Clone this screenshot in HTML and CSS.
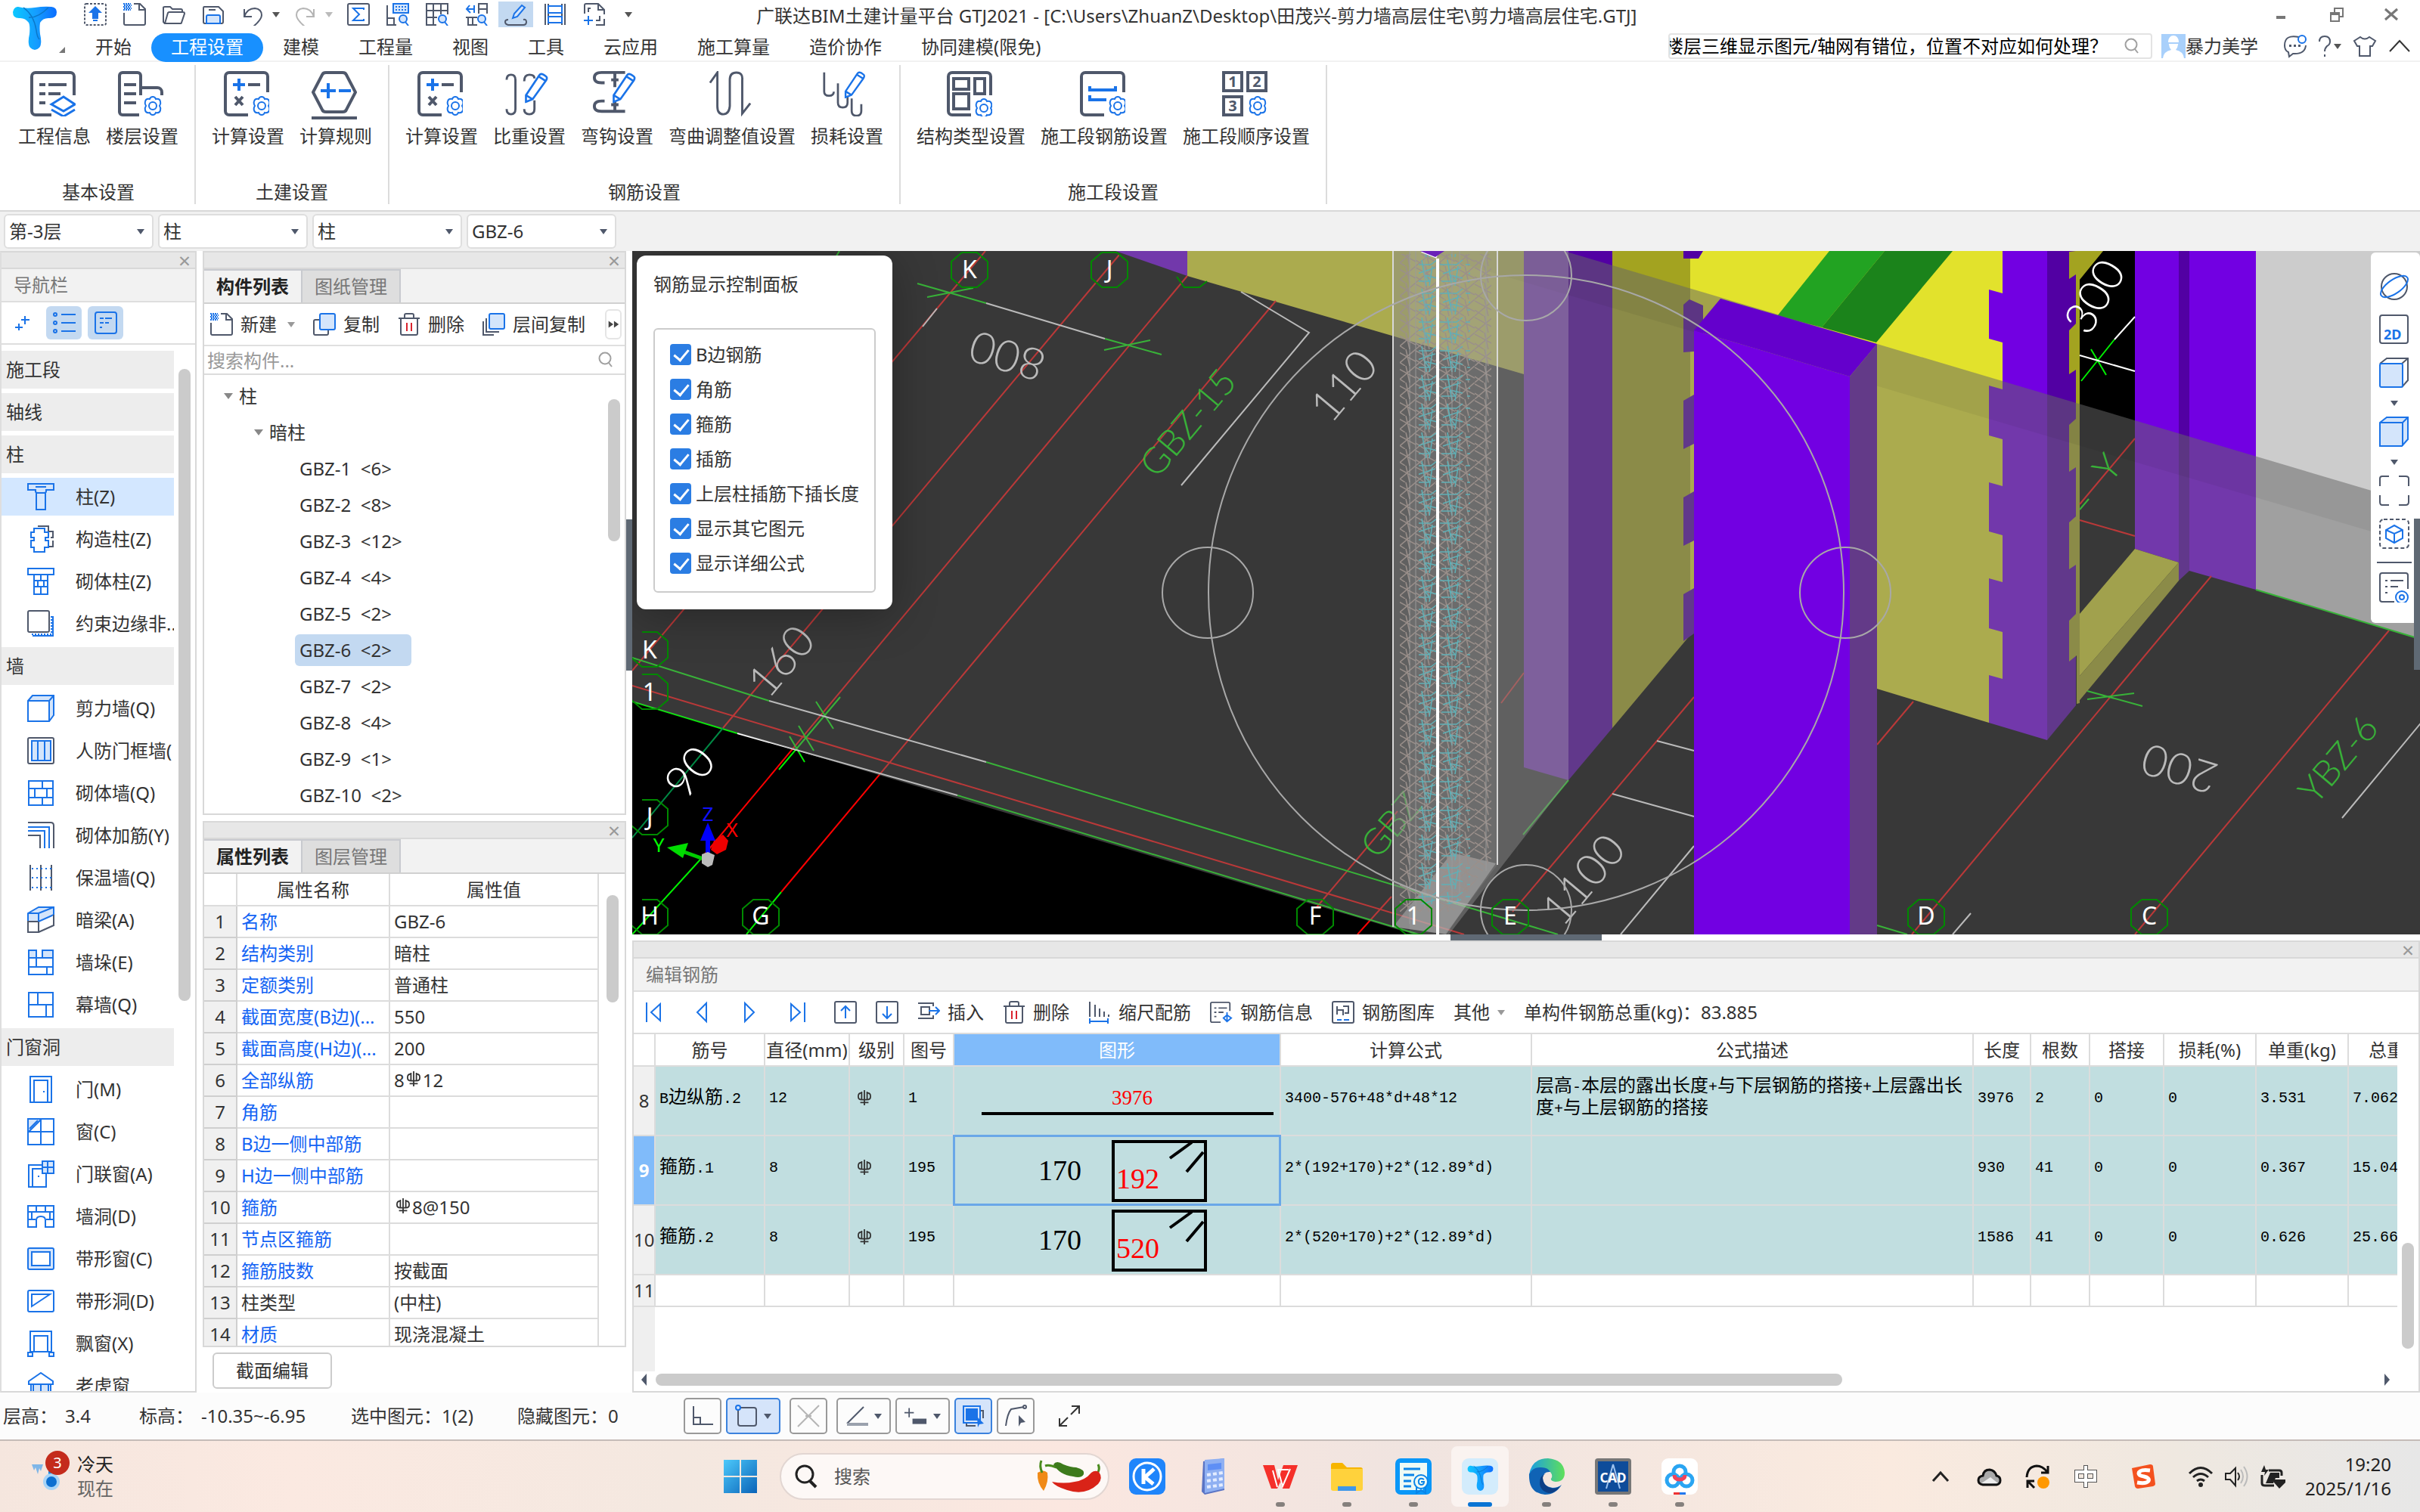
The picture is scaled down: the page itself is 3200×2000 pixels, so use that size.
FILE: index.html
```html
<!DOCTYPE html>
<html lang="zh-CN">
<head>
<meta charset="utf-8">
<title>广联达BIM土建计量平台 GTJ2021</title>
<link rel="stylesheet" href="styles.css">
</head>
<body>

<!-- ICONS -->
<svg class="defs" aria-hidden="true">
<symbol id="i-logo" viewBox="0 0 60 60"><defs><linearGradient id="tg" x1="0" x2="1"><stop offset="0" stop-color="#0cc8ff"/><stop offset=".55" stop-color="#159cff"/><stop offset="1" stop-color="#0a6dff"/></linearGradient></defs><path fill="url(#tg)" d="M8 3q10 3 22 1t22-1q7 1 7 7 0 8-9 8-9-1-13 6-1 7 0 15 3 13-1 18-6 6-12 0-4-5-1-18 1-11-1-15-5-7-13-6-8 0-8-8 1-6 6-7z"/><path fill="none" stroke="#0b77c8" stroke-width="1.5" d="M15 4q14 10 17 30 1 9 4 12M22 17q12 1 26-13"/></symbol>
<symbol id="q-up" viewBox="0 0 30 30"><rect class="d" stroke-dasharray="3 2" x="1" y="1" width="28" height="28" rx="2"/><path class="bf" d="M15 4l9 9h-5v8h-8v-8H6zM12 22h6v2h-6z"/></symbol>
<symbol id="q-new" viewBox="0 0 30 30"><path class="d" d="M14 1h8l7 7v19a2 2 0 0 1-2 2H3a2 2 0 0 1-2-2V13M21 1v8h8"/><path class="b" stroke-dasharray="2 1" d="M0 1h10M1 3h10M0 5h10M1 7h10M0 9h10"/></symbol>
<symbol id="q-open" viewBox="0 0 30 30"><path class="d" d="M3 27L1 25V6q0-1 2-1h7l3 3h11q2 0 2 2v3M3 27h20q2 0 2-1l4-12q0-2-2-2H9q-1 0-2 1z"/></symbol>
<symbol id="q-save" viewBox="0 0 30 30"><path class="d" d="M3 5h19l6 6v14q0 2-2 2H4q-2 0-2-2V7q0-2 1-2zM9 9h9"/><path class="b lf" d="M6 27V18q0-2 2-2h14q2 0 2 2v9z"/></symbol>
<symbol id="q-undo" viewBox="0 0 30 30"><path class="d" d="M4 8v10h10M4 18Q8 7 18 7q9 1 9 9 0 6-12 16"/></symbol>
<symbol id="q-redo" viewBox="0 0 30 30"><path class="l" d="M26 8v10H16M26 18Q22 7 12 7 3 8 3 16q0 6 12 16"/></symbol>
<symbol id="q-sum" viewBox="0 0 30 30"><rect class="d" x="1" y="1" width="28" height="28" rx="2"/><path class="b" stroke-width="3" d="M22 9V7H8l8 8-8 8h14v-2"/></symbol>
<symbol id="q-find" viewBox="0 0 30 30"><rect class="b lf" x="9" y="1" width="20" height="12"/><path class="b" stroke-dasharray="2 2" d="M12 5h15M12 9h15"/><path class="d" d="M1 3v26h12M1 20h9v9"/><circle class="b lf" cx="22" cy="21" r="5"/><path class="b" d="M25 25l4 5"/></symbol>
<symbol id="q-grid" viewBox="0 0 30 30"><path class="d" d="M14 29H1V1h28v14M1 10h28M1 19h14M10 1v28M20 1v14"/><circle class="b lf" cx="22" cy="21" r="5"/><path class="b" d="M25 25l4 5"/></symbol>
<symbol id="q-swap" viewBox="0 0 30 30"><path class="b" d="M2 8h10M6 3L2 8l5 5M12 3v10"/><path class="d" d="M18 14V1h11v13M18 8h11M1 19h15M4 19v10h12M10 19v10"/><circle class="b lf" cx="22" cy="21" r="5"/><path class="b" d="M25 25l4 5"/></symbol>
<symbol id="q-edit" viewBox="0 0 30 30"><path class="b lf" d="M11 20l2-6L23 3l4 3-10 12z"/><path class="d" d="M5 22q-4 0-4 3t4 4h20q4 0 4-4t-4-3"/></symbol>
<symbol id="q-film" viewBox="0 0 30 30"><path class="d" d="M2 1v28M28 1v28M6 1v28M24 1v28"/><path class="b wf" d="M6 4h18v9H6zM6 18h18v8H6z"/></symbol>
<symbol id="q-page" viewBox="0 0 30 30"><path class="d" d="M2 14V3q0-2 2-2h16l8 8v6M20 1v8h8M28 21v8H17M10 7H7v5M22 17v6h-5"/><path class="b" d="M7 17v12M1 23h12"/></symbol>

<symbol id="gear" viewBox="0 0 26 26"><path class="b w2" d="M13 1q3 0 4 3 5-1 6 3 1 3-1 6 2 3 1 6-1 4-6 3-1 3-4 3t-4-3q-5 1-6-3-1-3 1-6-2-3-1-6 1-4 6-3 1-3 4-3z"/><circle class="b w2" cx="13" cy="13" r="5"/></symbol>
<symbol id="pencil" viewBox="0 0 36 46"><path class="b w3" d="M2 44V34L22 4q2-3 6-1l3 2q4 2 1 7L12 40zM2 34l10 6M21 6l11 7"/></symbol>
<symbol id="r-info" viewBox="0 0 60 60"><path class="d w4" d="M58 32V7a5 5 0 0 0-5-5H7a5 5 0 0 0-5 5v46a5 5 0 0 0 5 5h21M12 18h8M24 18h24M12 30h8M24 30h16M12 42h8"/><path class="b w3" d="M28 44l16-10 15 10-15 9zM28 51l16 9 15-9"/></symbol>
<symbol id="r-floor" viewBox="0 0 60 60"><path class="d w4" d="M30 32V6a4 4 0 0 0-4-4H6a4 4 0 0 0-4 4v48a4 4 0 0 0 4 4h22M30 22h22a6 6 0 0 1 6 6v4M8 18h16M8 30h16M8 42h16"/><use href="#gear" x="33" y="33" width="26" height="26"/></symbol>
<symbol id="r-calc" viewBox="0 0 60 60"><path class="d w4" d="M58 28V7a5 5 0 0 0-5-5H7a5 5 0 0 0-5 5v46a5 5 0 0 0 5 5h25M32 18h16M15 34l10 11M25 34L15 45"/><path class="b w4" d="M12 18h16M20 10v16"/><use href="#gear" x="37" y="33" width="26" height="26"/></symbol>
<symbol id="r-rule" viewBox="0 0 60 60"><path class="d w4" d="M2 28L14 5q1-3 5-3h22q4 0 5 3l12 23-12 23q-1 3-5 3H19q-4 0-5-3zM0 62h60"/><path class="b w4" d="M12 26h20M22 16v20M36 26h16"/></symbol>
<symbol id="r-weight" viewBox="0 0 62 62"><path class="d w3" d="M2 12q0-7 6-7t6 7v40q0 7-6 7t-6-7M26 14q0-9 7-9t7 5M26 52q0 7 7 7t7-7V40"/><use href="#pencil" x="25" y="2" width="36" height="42"/></symbol>
<symbol id="r-hook" viewBox="0 0 62 62"><path class="d w4" d="M44 2H12Q2 2 2 9t10 7h4M30 2v20M25 12h10M44 55H12Q2 55 2 48t10-7h4M30 55V42M25 46h10"/><use href="#pencil" x="25" y="2" width="36" height="42"/></symbol>
<symbol id="r-bend" viewBox="0 0 60 62"><path class="d w3" d="M2 16L12 2v46q0 11 8 11t9-11V12q0-10 9-10t8 10v46l11-14"/></symbol>
<symbol id="r-loss" viewBox="0 0 66 66"><path class="d w3" d="M2 2v28q0 6 7 6t7-6M22 18v28q0 7 7 7t7-7V36M42 40v18q0 7 7 7t7-7v-10"/><use href="#pencil" x="29" y="0" width="36" height="40"/></symbol>
<symbol id="r-struct" viewBox="0 0 60 60"><path class="d w4" d="M58 32V7a5 5 0 0 0-5-5H7a5 5 0 0 0-5 5v46a5 5 0 0 0 5 5h25M9 10h20v14H9zM37 10h13v20H37zM9 30h20v20H9z"/><use href="#gear" x="36" y="36" width="26" height="26"/></symbol>
<symbol id="r-seg" viewBox="0 0 60 60"><path class="d w4" d="M58 28V7a5 5 0 0 0-5-5H7a5 5 0 0 0-5 5v46a5 5 0 0 0 5 5h25"/><path class="b w4" d="M13 20v5h34v-5M13 32v6h22"/><use href="#gear" x="37" y="33" width="26" height="26"/></symbol>

<symbol id="n-col" viewBox="0 0 36 36"><path class="b lf" d="M1 1h34v8H25v2q0 2-3 2h-8q-3 0-3-2V9H1z"/><path class="b" d="M11 5h14M12 13h12v22H12z"/></symbol>
<symbol id="n-gz" viewBox="0 0 36 36"><path class="d" d="M14 1h14v7h6v8h-3M34 20v8h-6"/><path class="b wf" d="M9 4h14v5h5v7h-4v4h4v9h-5v6H9v-6H5v-9h4v-4H5V9h4z"/></symbol>
<symbol id="n-qt" viewBox="0 0 36 36"><path class="b" d="M1 1h34v8H1zM9 9h18v26H9zM9 17h18M9 25h18M18 9v8M14 17v8M22 17v8M18 25v10"/></symbol>
<symbol id="n-ys" viewBox="0 0 36 36"><path class="b" d="M34 8v26H7"/><path class="b" stroke-dasharray="2 2" stroke-width="4" d="M6 32h26V8"/><rect class="d wf" x="1" y="1" width="28" height="28" rx="2"/></symbol>
<symbol id="n-box" viewBox="0 0 36 36"><path class="b lf" d="M1 8l6-7h28v26l-6 8H1z"/><rect class="b wf" x="1" y="8" width="28" height="27" rx="1"/><path class="b" d="M29 8l6-7"/></symbol>
<symbol id="n-rf" viewBox="0 0 36 36"><rect class="d" x="1" y="1" width="34" height="34" rx="2"/><path class="b lf" d="M6 5h25v26H6zM14 5v26M23 5v26"/></symbol>
<symbol id="n-brick" viewBox="0 0 36 36"><path class="b" d="M2 2h32v32H2zM2 12h32M2 24h32M20 2v10M10 12v12M26 12v12M20 24v10"/></symbol>
<symbol id="n-jj" viewBox="0 0 36 36"><path class="d" d="M1 1h30q4 0 4 4v30M1 18h16v17"/><path class="b" d="M1 7h28v28M1 12h22v23"/></symbol>
<symbol id="n-bw" viewBox="0 0 36 36"><path class="d" d="M4 1v34M18 1v34M32 1v34"/><path class="b" stroke-dasharray="2 4" d="M6 6h26M6 18h26M6 31h26"/></symbol>
<symbol id="n-beam" viewBox="0 0 36 36"><path class="b lf" d="M1 9l14-8h20v10l-20 9H1z"/><path class="d wf" d="M1 20h14v14H1zM15 34l20-9V11"/><path class="b" d="M1 9h14v11M15 9l20-8"/></symbol>
<symbol id="n-duo" viewBox="0 0 36 36"><path class="b lf" d="M2 2h10v10H2zM20 2h14v10H20z"/><path class="b" d="M2 2v32h32V2M2 12h32M2 24h32M12 12v12M26 24v10"/></symbol>
<symbol id="n-mu" viewBox="0 0 36 36"><path class="b" d="M2 2h32v32H2zM2 18h32M14 2v16M25 18v16"/></symbol>
<symbol id="n-door" viewBox="0 0 36 36"><path class="b" d="M4 35V1h28v34h-5V6H9v29zM9 35h18M22 20v2"/></symbol>
<symbol id="n-win" viewBox="0 0 36 36"><path class="b lf" d="M1 1h18L1 19z"/><path class="b" d="M1 1h34v34H1zM1 18h34M18 1v34M3 14L14 3"/></symbol>
<symbol id="n-dw" viewBox="0 0 36 36"><path class="b" d="M20 6H2v29h23V18M7 35V11h13M15 20v2"/><path class="b lf" d="M20 1h15v16H20zM20 9h15M27 1v16"/></symbol>
<symbol id="n-hole" viewBox="0 0 36 36"><path class="b" d="M1 4h34v28H24v-9q0-5-6-5t-6 5v9H1zM1 12h34M1 22h10M25 22h10M12 4v8M24 4v8M6 12v10M30 12v10"/></symbol>
<symbol id="n-band" viewBox="0 0 36 36"><rect class="b lf" x="1" y="4" width="34" height="28" rx="2"/><rect class="b wf" x="6" y="9" width="24" height="18"/></symbol>
<symbol id="n-bdh" viewBox="0 0 36 36"><rect class="b" x="1" y="4" width="34" height="28" rx="2"/><path class="b" d="M6 9h24L6 25z"/></symbol>
<symbol id="n-bay" viewBox="0 0 36 36"><path class="b" d="M4 29V2h28v27M9 29V8h18v21M4 29h28M1 30h6v5H1zM29 30h6v5h-6z"/></symbol>
<symbol id="n-roof" viewBox="0 0 36 36"><path class="b lf" d="M8 16h20v18H8z"/><path class="b" d="M2 12L18 1l16 11v4H2zM5 16v20M31 16v20M18 16v18"/></symbol>

<symbol id="s-copy" viewBox="0 0 30 30"><path class="d" d="M8 9H3q-2 0-2 2v16q0 2 2 2h15q2 0 2-2v-5"/><rect class="b lf" x="9" y="1" width="20" height="21" rx="2"/></symbol>
<symbol id="s-del" viewBox="0 0 30 30"><path class="d" d="M1 7h28M9 7V3q0-2 2-2h8q2 0 2 2v4M4 7v20q0 2 2 2h18q2 0 2-2V7"/><path class="r" d="M12 13v11M18 13v11"/></symbol>
<symbol id="s-lcopy" viewBox="0 0 30 30"><path class="d" d="M1 11v18h14M5 7v18h17"/><rect class="b lf" x="9" y="1" width="20" height="20" rx="2"/></symbol>
<symbol id="s-mag" viewBox="0 0 22 22"><circle cx="10" cy="9" r="7.5" fill="none" stroke="#a0a0a0" stroke-width="2"/><path d="M15 15l4 5" stroke="#a0a0a0" stroke-width="2"/></symbol>
<symbol id="s-spark" viewBox="0 0 20 20"><path class="b" d="M13 1v11M8 6h11M5 11v9M0 16h10"/></symbol>
<symbol id="s-list" viewBox="0 0 30 30"><path class="b" d="M11 4h19M11 15h19M11 26h19"/><circle class="b" cx="3" cy="4" r="2"/><circle class="b" cx="3" cy="15" r="2"/><circle class="b" cx="3" cy="26" r="2"/></symbol>
<symbol id="s-card" viewBox="0 0 30 30"><rect class="b" x="1" y="1" width="28" height="28" rx="3"/><path class="b" d="M7 9h5M14 9h9M7 15h5M14 15h5M7 21h3"/></symbol>
<symbol id="s-bar" viewBox="0 0 20 22"><path fill="none" stroke="#333" stroke-width="2" d="M10 0v22M6 2v13M14 2v13M6 4Q1 4 1 9t5 5h8q5 0 5-5t-5-5M4 18h12"/></symbol>

<symbol id="e-first" viewBox="0 0 30 30"><path class="b" d="M5 2v26M23 4v22L11 15z"/></symbol>
<symbol id="e-prev" viewBox="0 0 30 30"><path class="b" d="M21 3v24L9 15z"/></symbol>
<symbol id="e-next" viewBox="0 0 30 30"><path class="b" d="M9 3v24l12-12z"/></symbol>
<symbol id="e-last" viewBox="0 0 30 30"><path class="b" d="M25 2v26M7 4v22l12-11z"/></symbol>
<symbol id="e-up" viewBox="0 0 30 30"><rect class="d" x="1" y="1" width="28" height="28" rx="2"/><path class="b" d="M15 23V7M9 13l6-6 6 6"/></symbol>
<symbol id="e-down" viewBox="0 0 30 30"><rect class="d" x="1" y="1" width="28" height="28" rx="2"/><path class="b" d="M15 7v16M9 17l6 6 6-6"/></symbol>
<symbol id="e-ins" viewBox="0 0 30 30"><path class="d" d="M1 3h20v4M1 23h20v-4M5 8h11v10H5z"/><path class="b" d="M15 13h14M24 8l5 5-5 5"/></symbol>
<symbol id="e-scale" viewBox="0 0 30 30"><path class="d" d="M2 1v20M9 5v16M15 10v11M21 14v7M27 18v3"/><path class="b" d="M1 27h26M2 23v7M26 23v7"/></symbol>
<symbol id="e-info" viewBox="0 0 32 30"><path class="d" d="M28 13V3q0-2-2-2H3Q1 1 1 3v24q0 2 2 2h12M6 9h3M12 9h12M6 15h3M12 15h7M6 21h3"/><path class="b" d="M24 15v12M19 23l5 5 6-5-6-4z"/></symbol>
<symbol id="e-lib" viewBox="0 0 30 30"><rect class="d" x="1" y="1" width="28" height="28" rx="2"/><path class="d" d="M7 7v11M7 12h8v7M15 7h7v9h-5"/><path class="b" d="M7 25h6M16 25h7"/></symbol>

<symbol id="v-orbit" viewBox="0 0 40 40"><circle class="d w2" cx="20" cy="20" r="17"/><ellipse class="b w2" cx="20" cy="20" rx="21" ry="9" transform="rotate(-35 20 20)"/></symbol>
<symbol id="v-wire" viewBox="0 0 40 40"><path class="d w2" d="M1 8l9-7h28v29l-8 9M30 8l8-7"/><rect class="b w2 lf" x="1" y="8" width="30" height="31" rx="2"/></symbol>
<symbol id="v-cube" viewBox="0 0 40 40"><path class="b w2 lf" d="M1 8l9-7h28v29l-8 9H1z"/><path class="b w2" d="M1 8h30v31M31 8l7-7"/></symbol>
<symbol id="v-fit" viewBox="0 0 40 40"><path class="d w2" d="M1 14V4q0-3 3-3h9M26 1h9q4 0 4 3v10M39 26v9q0 4-4 4h-9M13 39H4q-3 0-3-4v-9"/></symbol>
<symbol id="v-sel" viewBox="0 0 40 40"><rect class="d w2" stroke-dasharray="5 3" x="1" y="1" width="38" height="38" rx="5"/><path class="b w2" d="M20 9l11 6v11l-11 6-11-6V15zM9 15l11 5 11-5M20 20v12"/></symbol>
<symbol id="v-set" viewBox="0 0 40 40"><path class="d w2" d="M38 22V4q0-3-3-3H4Q1 1 1 4v32q0 3 3 3h16M8 11h3M15 11h17M8 19h3M15 19h10M8 27h3"/><circle class="b w2" cx="30" cy="33" r="8"/><circle class="b w2" cx="30" cy="33" r="3"/></symbol>
</svg>

<!-- TITLE BAR -->
<header class="top">
<a class="logo" href="#" aria-label="菜单"><svg><use href="#i-logo"/></svg></a>
<div class="topRows">
<div class="titleRow">
<div class="quick">
<button aria-label="升级"><svg><use href="#q-up"/></svg></button>
<button aria-label="新建"><svg><use href="#q-new"/></svg></button>
<button aria-label="打开"><svg><use href="#q-open"/></svg></button>
<button aria-label="保存"><svg><use href="#q-save"/></svg></button>
<button aria-label="撤销"><svg><use href="#q-undo"/></svg></button>
<span class="dd"></span>
<button aria-label="恢复"><svg><use href="#q-redo"/></svg></button>
<span class="dd pale"></span>
<button aria-label="汇总"><svg><use href="#q-sum"/></svg></button>
<button aria-label="查找"><svg><use href="#q-find"/></svg></button>
<button aria-label="表格"><svg><use href="#q-grid"/></svg></button>
<button aria-label="替换"><svg><use href="#q-swap"/></svg></button>
<button class="on" aria-label="编辑"><svg><use href="#q-edit"/></svg></button>
<button aria-label="胶片"><svg><use href="#q-film"/></svg></button>
<button aria-label="页面"><svg><use href="#q-page"/></svg></button>
<span class="dd bar"></span>
</div>
<h1 class="title">广联达BIM土建计量平台 GTJ2021 - [C:\Users\ZhuanZ\Desktop\田茂兴-剪力墙高层住宅\剪力墙高层住宅.GTJ]</h1>
<div class="winBtns">
<button aria-label="最小化"><svg viewBox="0 0 20 20"><path fill="#777" d="M2 12h12v4H2z"/></svg></button>
<button aria-label="还原"><svg viewBox="0 0 20 20"><path fill="none" stroke="#777" stroke-width="2" d="M2 8h11v11H2zM2 10h11M7 7V2h11v11h-4"/></svg></button>
<button aria-label="关闭"><svg viewBox="0 0 20 20"><path stroke="#777" stroke-width="3" d="M2 3l16 14M18 3L2 17"/></svg></button>
</div>
</div>
<div class="tabRow">
<nav class="tabs">
<a href="#">开始</a><a href="#" class="cur">工程设置</a><a href="#">建模</a><a href="#">工程量</a><a href="#">视图</a><a href="#">工具</a><a href="#">云应用</a><a href="#">施工算量</a><a href="#">造价协作</a><a href="#">协同建模(限免)</a>
</nav>
<div class="account">
<label class="help"><input type="text" aria-label="搜索帮助" value="楼层三维显示图元/轴网有错位，位置不对应如何处理？"><svg><use href="#s-mag"/></svg></label>
<svg class="avatar" viewBox="0 0 32 32"><path fill="#a9d0fb" d="M0 0h32v32H0z"/><path fill="#fff" d="M9 10q1-8 7-8t7 8l-2 8-2 3q10 2 11 11H2q1-9 11-11l-2-3z"/><path stroke="#a9d0fb" stroke-width="2" d="M9 12h14"/></svg>
<span class="user">暴力美学</span>
<svg class="ic" viewBox="0 0 30 30"><path class="d" d="M20 3Q1-1 1 14q0 7 5 9l1 6 5-4q16 1 17-11"/><path fill="#4f586b" d="M7 13h3v3H7zM13 13h3v3h-3zM19 13h3v3h-3z"/><circle class="b" cx="24" cy="6" r="5"/></svg>
<svg class="qm" viewBox="0 0 16 30"><path class="d w2" d="M1 9q0-7 7-7t7 7q0 4-4 6-3 3-3 7M8 26v3"/></svg><span class="dd"></span>
<svg class="ic shirt" viewBox="0 0 30 30"><path class="d" d="M9 3q6 5 12 0l8 5-4 7h-3v13H8V15H5L1 8z"/></svg>
<svg class="ic" viewBox="0 0 30 30"><path fill="none" stroke="#333" stroke-width="2" d="M2 22L15 8l13 14"/></svg>
</div>
</div>
</div>
</header>

<!-- RIBBON -->
<section class="ribbon">
<div class="grp"><div class="btns">
<button><svg><use href="#r-info"/></svg>工程信息</button>
<button><svg><use href="#r-floor"/></svg>楼层设置</button>
</div><p>基本设置</p></div>
<div class="grp"><div class="btns">
<button><svg><use href="#r-calc"/></svg>计算设置</button>
<button><svg viewBox="0 0 60 60"><use href="#r-rule" width="60" height="60" overflow="visible"/><path class="d w4" d="M0 62h60"/></svg>计算规则</button>
</div><p>土建设置</p></div>
<div class="grp"><div class="btns">
<button><svg><use href="#r-calc"/></svg>计算设置</button>
<button><svg><use href="#r-weight"/></svg>比重设置</button>
<button><svg><use href="#r-hook"/></svg>弯钩设置</button>
<button><svg><use href="#r-bend"/></svg>弯曲调整值设置</button>
<button><svg><use href="#r-loss"/></svg>损耗设置</button>
</div><p>钢筋设置</p></div>
<div class="grp"><div class="btns">
<button><svg><use href="#r-struct"/></svg>结构类型设置</button>
<button><svg><use href="#r-seg"/></svg>施工段钢筋设置</button>
<button><svg viewBox="0 0 60 60"><path class="d w4" d="M2 2h24v24H2zM34 2h24v24H34zM2 34h24v24H2z"/><g class="ord"><text x="14" y="21">1</text><text x="46" y="21">2</text><text x="14" y="53">3</text></g><use href="#gear" x="34" y="33" width="26" height="26"/></svg>施工段顺序设置</button>
</div><p>施工段设置</p></div>
</section>

<div class="pickers">
<label><select aria-label="楼层"><option>第-3层</option></select></label>
<label><select aria-label="构件大类"><option>柱</option></select></label>
<label><select aria-label="构件类型"><option>柱</option></select></label>
<label><select aria-label="构件"><option>GBZ-6</option></select></label>
</div>

<main class="work">

<!-- NAVIGATION -->
<aside class="panel nav">
<div class="grip"><button aria-label="关闭">×</button></div>
<h2 class="cap">导航栏</h2>
<div class="navTools">
<button aria-label="展开"><svg class="sm"><use href="#s-spark"/></svg></button>
<button class="on" aria-label="列表"><svg><use href="#s-list"/></svg></button>
<button class="on" aria-label="卡片"><svg><use href="#s-card"/></svg></button>
</div>
<div class="navBody">
<ul class="navList">
<li class="head">施工段</li>
<li class="head">轴线</li>
<li class="head">柱</li>
<li class="sel"><svg><use href="#n-col"/></svg>柱(Z)</li>
<li><svg><use href="#n-gz"/></svg>构造柱(Z)</li>
<li><svg><use href="#n-qt"/></svg>砌体柱(Z)</li>
<li><svg><use href="#n-ys"/></svg>约束边缘非..</li>
<li class="head">墙</li>
<li><svg><use href="#n-box"/></svg>剪力墙(Q)</li>
<li><svg><use href="#n-rf"/></svg>人防门框墙(</li>
<li><svg><use href="#n-brick"/></svg>砌体墙(Q)</li>
<li><svg><use href="#n-jj"/></svg>砌体加筋(Y)</li>
<li><svg><use href="#n-bw"/></svg>保温墙(Q)</li>
<li><svg><use href="#n-beam"/></svg>暗梁(A)</li>
<li><svg><use href="#n-duo"/></svg>墙垛(E)</li>
<li><svg><use href="#n-mu"/></svg>幕墙(Q)</li>
<li class="head">门窗洞</li>
<li><svg><use href="#n-door"/></svg>门(M)</li>
<li><svg><use href="#n-win"/></svg>窗(C)</li>
<li><svg><use href="#n-dw"/></svg>门联窗(A)</li>
<li><svg><use href="#n-hole"/></svg>墙洞(D)</li>
<li><svg><use href="#n-band"/></svg>带形窗(C)</li>
<li><svg><use href="#n-bdh"/></svg>带形洞(D)</li>
<li><svg><use href="#n-bay"/></svg>飘窗(X)</li>
<li><svg><use href="#n-roof"/></svg>老虎窗</li>
</ul>
<div class="vbar"><i class="thumb navThumb"></i></div>
</div>
</aside>

<div class="side">
<!-- COMPONENT LIST -->
<section class="panel comps">
<div class="grip"><button aria-label="关闭">×</button></div>
<div class="ptabs"><button class="cur">构件列表</button><button>图纸管理</button></div>
<div class="compTools">
<button><svg><use href="#q-new"/></svg>新建<span class="dd grey"></span></button>
<button><svg><use href="#s-copy"/></svg>复制</button>
<button><svg><use href="#s-del"/></svg>删除</button>
<button><svg><use href="#s-lcopy"/></svg>层间复制</button>
<button class="more" aria-label="更多"><svg viewBox="0 0 20 20"><path fill="#444" d="M3 5l7 5-7 5zM11 5l7 5-7 5z"/></svg></button>
</div>
<label class="find"><input type="text" aria-label="搜索构件" placeholder="搜索构件..."><svg><use href="#s-mag"/></svg></label>
<div class="treeBody">
<ul class="tree">
<li class="t1"><i class="tw"></i>柱</li>
<li class="t2"><i class="tw"></i>暗柱</li>
<li class="t3"><span>GBZ-1 &nbsp;&lt;6&gt;</span></li>
<li class="t3"><span>GBZ-2 &nbsp;&lt;8&gt;</span></li>
<li class="t3"><span>GBZ-3 &nbsp;&lt;12&gt;</span></li>
<li class="t3"><span>GBZ-4 &nbsp;&lt;4&gt;</span></li>
<li class="t3"><span>GBZ-5 &nbsp;&lt;2&gt;</span></li>
<li class="t3"><span class="sel">GBZ-6 &nbsp;&lt;2&gt;</span></li>
<li class="t3"><span>GBZ-7 &nbsp;&lt;2&gt;</span></li>
<li class="t3"><span>GBZ-8 &nbsp;&lt;4&gt;</span></li>
<li class="t3"><span>GBZ-9 &nbsp;&lt;1&gt;</span></li>
<li class="t3"><span>GBZ-10 &nbsp;&lt;2&gt;</span></li>
</ul>
<div class="vbar"><i class="thumb treeThumb"></i></div>
</div>
</section>

<!-- PROPERTIES -->
<section class="panel props">
<div class="grip"><button aria-label="关闭">×</button></div>
<div class="ptabs"><button class="cur">属性列表</button><button>图层管理</button></div>
<div class="propBody">
<table class="prop">
<colgroup><col class="p1"><col class="p2"><col></colgroup>
<tr><th></th><th>属性名称</th><th>属性值</th></tr>
<tr><th>1</th><td>名称</td><td>GBZ-6</td></tr>
<tr><th>2</th><td>结构类别</td><td>暗柱</td></tr>
<tr><th>3</th><td>定额类别</td><td>普通柱</td></tr>
<tr><th>4</th><td>截面宽度(B边)(...</td><td>550</td></tr>
<tr><th>5</th><td>截面高度(H边)(...</td><td>200</td></tr>
<tr><th>6</th><td>全部纵筋</td><td>8<svg class="rb"><use href="#s-bar"/></svg>12</td></tr>
<tr><th>7</th><td>角筋</td><td></td></tr>
<tr><th>8</th><td>B边一侧中部筋</td><td></td></tr>
<tr><th>9</th><td>H边一侧中部筋</td><td></td></tr>
<tr><th>10</th><td>箍筋</td><td><svg class="rb"><use href="#s-bar"/></svg>8@150</td></tr>
<tr><th>11</th><td>节点区箍筋</td><td></td></tr>
<tr><th>12</th><td>箍筋肢数</td><td>按截面</td></tr>
<tr><th>13</th><td class="plain">柱类型</td><td>(中柱)</td></tr>
<tr><th>14</th><td>材质</td><td>现浇混凝土</td></tr>
</table>
<div class="vbar"><i class="thumb propThumb"></i></div>
</div>
<div class="propFoot"><button class="secBtn">截面编辑</button></div>
</section>
</div>

<div class="gutter"><button aria-label="收起"></button></div>

<div class="center">
<!-- 3D VIEW -->
<section class="view">
<svg class="scene" viewBox="836 332 2364 904" preserveAspectRatio="xMinYMin slice">
<defs>
<pattern id="mesh" width="26" height="22" patternUnits="userSpaceOnUse"><path d="M0 22L26 0M0 2l26 14M0 14l12 8M13 0l5 22" fill="none" stroke="#9a8f8a" stroke-width="1.5"/></pattern>
<pattern id="ties" width="34" height="38" patternUnits="userSpaceOnUse"><path d="M0 8h22l8-6M4 20l24-8M2 30h18l-6-8 16 4M10 2l6 34M24 10l-4 26" fill="none" stroke="#5fb0b6" stroke-width="1.5"/></pattern>
</defs>
<rect x="836" y="332" width="2400" height="1000" fill="#000"/>
<!-- far wall, walls and columns behind the slab -->
<path fill="#ccc" d="M2983 332h240v520l-240-72z"/>
<path fill="#7200e2" d="M1475 332h95v33zM2015 332h59v700l-59-17z"/>
<path fill="#e2e22c" d="M1570 332h445v163l-445-130zM2235 332h413v568l-18 56-395-120z"/>
<path fill="#5200a3" d="M2074 332h58v631l-58 69z"/>
<path fill="#a3a320" d="M2132 332h103v508l-103 123z"/>
<path fill="#5200a3" d="M2226 332h26l-6 10h-20zM2226 403l8-7 18 8v60l-26 2zM2226 530l14-8v65l-14 7zM2226 658l14-8v65l-14 7zM2226 786l14-8v60l-14 10z"/>
<path fill="#22a322" d="M2419 332h73l-83 101-59-15z"/>
<path fill="#1b831b" d="M2492 332h90l-101 121-72-20z"/>
<path fill="#7200e2" d="M2648 332h59v647l-77-23v-63l18 5v-62l-18-5v-66l18 5v-62l-18-5v-65l18 5v-62l-18-5v-66l18 5v-62l-18-5v-65l18 5z"/>
<path fill="#5200a3" d="M2707 332h38v601l-38 46z"/>
<path fill="#a3a320" d="M2745 332h36l-31 38v560l-4 1v-64l-10 8v-54l9-9v-65l-9 6v-62l9-8v-65l-9 6v-62l9-8v-65l-9 6v-58l9-9v-65l-9 6v-36z"/>
<path fill="#7200e2" d="M2823 332h58v412l-58-18zM2895 332h88v448l-88-25z"/>
<path fill="#5200a3" d="M2881 332h14v423l-14 13z"/>
<path fill="#cfcf2a" d="M2823 726l58 18-131 150v-82z"/>
<path fill="#a3a320" d="M2881 744v24l-135 163 4-37z"/>
<!-- grid axes and dimension lines -->
<g class="ax">
<path class="gr" d="M1303 332L836 887M1480 337L956 963M1570 365L926 1137M1687 398l-654 782M836 907l1100 329M1848 1073l-107 127M1840 1186l-45 50M2924 762l-396 474M3159 834l-336 402M2530 928l-48 57M2240 922l-240 284M2015 890l-30 40M2823 580l-73 87M2750 688l73 21"/>
<path class="gg" d="M836 870l181 57M1304 1008l756 228M836 928l139 42M1266 1052l610 184M1213 375l91 26M1461 448l75 21M1226 393l61-12M1460 463l61-13M1111 922l-81 96M1079 928l23 36M1056 960l20 33M1044 974l20 34M926 1137l-90 99M1033 1180l-46 56M2752 504l44-55M2765 462l20 34M2760 914l73 20M2760 925l62-8M2983 780l240 72M2074 1032l-60 72M2750 674l12-14M2482 1224l40 12M1110 332l-6 10"/>
<path class="gdark" d="M956 963l-120 145"/>
<path class="gw" d="M1017 927l287 81M975 970l291 82M1304 401l157 47M1239 408l-19 24M1641 386l90 54-169 202M2191 980l49 13M2132 1050l108 30M2143 1236l97-117M3097 1082l126-152M2750 470l73 21M2796 449l27-30M2582 1236l24-28"/>
</g>
<g class="dim">
<text transform="translate(1386 466) rotate(197)">800</text>
<text transform="translate(1760 562) rotate(-50)">110</text>
<text transform="translate(1016 926) rotate(-50)">160</text>
<text transform="translate(906 1060) rotate(-50)">90</text>
<text transform="translate(2066 1228) rotate(-50)">1100</text>
<text transform="translate(2936 1012) rotate(197)">200</text>
<text transform="translate(2762 446) rotate(-60)">300</text>
<g class="gname">
<text transform="translate(1530 634) rotate(-50)">GBZ-15</text>
<text transform="translate(3062 1066) rotate(-50)">YBZ-6</text>
<text transform="translate(1822 1138) rotate(-50)">GBZ</text>
<text transform="translate(2790 640) rotate(-50)">Y</text>
</g>
</g>
<!-- floor slab -->
<path fill="#727272" fill-opacity=".49" d="M836 332h1232l1132 336v568H1870L836 928z"/>
<path fill="#000" fill-opacity=".05" d="M1876 332h192l1132 336v54z"/>
<path fill="#8d8d8d" fill-opacity=".48" d="M1842 332h232v700l-158 204-74-10z"/>
<!-- reinforced column -->
<path fill="#fff" fill-opacity=".08" d="M1864 332h116v812l-70 92h-46z"/>
<path fill="#ccc" fill-opacity=".4" d="M1920 1128l58 14-66 94-70-10z"/>
<path fill="url(#mesh)" d="M1851 336h121v800l-50 70h-71z"/>
<path fill="url(#ties)" d="M1876 336h68v860h-68z"/>
<path class="rod" d="M1864 332v890M1872 332v880M1884 332v870M1920 332v860M1930 332v850M1965 332v820"/>
<path fill="none" stroke="#d8d8d8" stroke-width="2" d="M1980 332v812M1842 332v894"/>
<path fill="none" stroke="#fff" stroke-width="4" d="M1901 342v894M1880 332l20 8"/>
<path fill="#6a21b8" d="M1878 332h32l-12 8z"/>
<!-- front column -->
<path fill="#7200e2" d="M2240 437l206 61v738h-206z"/>
<path fill="#6400cc" d="M2240 437l35-42 207 60-36 43z"/>
<path fill="#633a88" d="M2446 498l36-43v781h-36z"/>
<!-- orbit ring -->
<g class="ring"><circle cx="2018" cy="784" r="420"/><circle cx="1597" cy="784" r="60"/><circle cx="2440" cy="784" r="60"/><circle cx="2018" cy="364" r="60"/><circle cx="2018" cy="1204" r="60"/></g>
<!-- axis tags -->
<g class="tag">
<path d="M1272 334h20l14 12v22l-14 12h-20l-14-12v-22zM1457 334h20l14 12v22l-14 12h-20l-14-12v-22zM1556 366l10 14h20l10-8M849 836h20l14 12v22l-14 12h-20l-14-12M849 892h20l14 12v22l-14 12h-20l-14-12M849 1058h20l14 12v22l-14 12h-20l-14-12M849 1190h20l14 12v22l-14 12h-20l-14-12M996 1190h20l14 12v22l-14 12h-20l-14-12v-22zM1729 1190h20l14 12v22l-14 12h-20l-14-12v-22zM1859 1190h20l14 12v22l-14 12h-20l-14-12v-22zM1987 1190h20l14 12v22l-14 12h-20l-14-12v-22zM2537 1190h20l14 12v22l-14 12h-20l-14-12v-22zM2832 1190h20l14 12v22l-14 12h-20l-14-12v-22z"/>
<text x="1282" y="368">K</text><text x="1467" y="368">J</text><text x="859" y="871">K</text><text x="859" y="927">1</text><text x="859" y="1092">J</text><text x="859" y="1223">H</text><text x="1006" y="1223">G</text><text x="1739" y="1223">F</text><text x="1869" y="1223">1</text><text x="1997" y="1223">E</text><text x="2547" y="1223">D</text><text x="2842" y="1223">C</text>
</g>
<!-- gizmo -->
<path stroke="#0c0" stroke-width="5" d="M930 1136l-28-10"/><path fill="#0d0" d="M882 1121l28-6-7 20z"/>
<path fill="#e00" d="M940 1124l4-12 12-8 7 8-3 12-12 6z"/>
<path fill="#00f" d="M926 1112l10-24 10 24h-7v20h-6v-20z"/><path fill="#bbb" d="M928 1130l8-3 9 4-3 13-6 3-8-5z"/>
<g class="giz"><text x="871" y="1127" fill="#0f0">Y</text><text x="936" y="1086" fill="#11f">Z</text><text x="968" y="1107" fill="#f00">X</text></g>
</svg>

<form class="ctrl">
<h3>钢筋显示控制面板</h3>
<fieldset>
<label><input type="checkbox" checked>B边钢筋</label>
<label><input type="checkbox" checked>角筋</label>
<label><input type="checkbox" checked>箍筋</label>
<label><input type="checkbox" checked>插筋</label>
<label><input type="checkbox" checked>上层柱插筋下插长度</label>
<label><input type="checkbox" checked>显示其它图元</label>
<label><input type="checkbox" checked>显示详细公式</label>
</fieldset>
</form>

<div class="viewTools">
<button aria-label="动态观察"><svg><use href="#v-orbit"/></svg></button>
<button aria-label="二维"><svg viewBox="0 0 40 40"><rect class="d w2" x="1" y="1" width="37" height="37" rx="3"/><text class="t2d" x="6" y="33">2D</text></svg></button>
<button aria-label="俯视"><svg><use href="#v-wire"/></svg></button><span class="dd dk"></span>
<button aria-label="实体"><svg><use href="#v-cube"/></svg></button><span class="dd dk"></span>
<button aria-label="全屏"><svg><use href="#v-fit"/></svg></button>
<button aria-label="局部三维"><svg><use href="#v-sel"/></svg></button>
<hr>
<button aria-label="显示设置"><svg><use href="#v-set"/></svg></button>
</div>
<button class="viewHandle" aria-label="收起工具"></button>
</section>

<div class="split"><button aria-label="收起面板"></button></div>

<!-- REBAR TABLE -->
<section class="panel rebar">
<div class="grip"><button aria-label="关闭">×</button></div>
<h2 class="cap">编辑钢筋</h2>
<div class="rebarTools">
<div class="steps">
<button aria-label="首行"><svg><use href="#e-first"/></svg></button>
<button aria-label="上一行"><svg><use href="#e-prev"/></svg></button>
<button aria-label="下一行"><svg><use href="#e-next"/></svg></button>
<button aria-label="末行"><svg><use href="#e-last"/></svg></button>
</div>
<button aria-label="上移"><svg><use href="#e-up"/></svg></button>
<button aria-label="下移"><svg><use href="#e-down"/></svg></button>
<button><svg><use href="#e-ins"/></svg>插入</button>
<button><svg><use href="#s-del"/></svg>删除</button>
<button><svg><use href="#e-scale"/></svg>缩尺配筋</button>
<button><svg><use href="#e-info"/></svg>钢筋信息</button>
<button><svg><use href="#e-lib"/></svg>钢筋图库</button>
<button>其他<span class="dd grey"></span></button>
<span>单构件钢筋总重(kg)：83.885</span>
</div>
<div class="rebarBody">
<div class="tableClip">
<table class="bars">
<colgroup><col class="c0"><col class="c1"><col class="c2"><col class="c3"><col class="c4"><col class="c5"><col class="c6"><col class="c7"><col class="c8"><col class="c9"><col class="c10"><col class="c11"><col class="c12"><col class="c13"></colgroup>
<tr class="hd"><th></th><th>筋号</th><th>直径(mm)</th><th>级别</th><th>图号</th><th class="pick">图形</th><th>计算公式</th><th>公式描述</th><th>长度</th><th>根数</th><th>搭接</th><th>损耗(%)</th><th>单重(kg)</th><th>总重(kg)</th></tr>
<tr><th>8</th><td class="cn"><i>B</i>边纵筋<i>.2</i></td><td>12</td><td class="mid"><svg class="rb"><use href="#s-bar"/></svg></td><td>1</td>
<td class="fig"><svg viewBox="0 0 430 88"><text class="red f1" x="208" y="49">3976</text><path stroke="#000" stroke-width="4" d="M36 61h386"/></svg></td>
<td>3400-576+48*d+48*12</td><td class="cn">层高<i>-</i>本层的露出长度<i>+</i>与下层钢筋的搭接<i>+</i>上层露出长度<i>+</i>与上层钢筋的搭接</td><td>3976</td><td>2</td><td>0</td><td>0</td><td>3.531</td><td>7.062</td></tr>
<tr class="on"><th>9</th><td class="cn">箍筋<i>.1</i></td><td>8</td><td class="mid"><svg class="rb"><use href="#s-bar"/></svg></td><td>195</td>
<td class="fig cursor"><svg viewBox="0 0 430 88"><text class="f2" x="111" y="57">170</text><text class="red f2" x="214" y="68">192</text><path fill="none" stroke="#000" stroke-width="4" d="M210 6h122v78H210zM285 28l29-21M307 46l22-26"/></svg></td>
<td>2*(192+170)+2*(12.89*d)</td><td></td><td>930</td><td>41</td><td>0</td><td>0</td><td>0.367</td><td>15.047</td></tr>
<tr><th>10</th><td class="cn">箍筋<i>.2</i></td><td>8</td><td class="mid"><svg class="rb"><use href="#s-bar"/></svg></td><td>195</td>
<td class="fig"><svg viewBox="0 0 430 88"><text class="f2" x="111" y="57">170</text><text class="red f2" x="214" y="68">520</text><path fill="none" stroke="#000" stroke-width="4" d="M210 6h122v78H210zM285 28l29-21M307 46l22-26"/></svg></td>
<td>2*(520+170)+2*(12.89*d)</td><td></td><td>1586</td><td>41</td><td>0</td><td>0</td><td>0.626</td><td>25.666</td></tr>
<tr class="blank"><th>11</th><td></td><td></td><td></td><td></td><td></td><td></td><td></td><td></td><td></td><td></td><td></td><td></td><td></td></tr>
</table>
</div>
<div class="vbar"><i class="thumb barThumb"></i></div>
</div>
<div class="hbar"><i class="larr"></i><div class="track"><i class="thumb"></i></div><i class="rarr"></i></div>
</section>
</div>
</main>

<!-- STATUS -->
<footer class="status">
<div class="facts">
<span class="f-a">层高：<b>3.4</b></span><span class="f-b">标高：<b>-10.35~-6.95</b></span><span class="f-c">选中图元：1(2)</span><span>隐藏图元：0</span>
</div>
<div class="snap">
<button aria-label="正交"><svg viewBox="0 0 30 30"><path class="d w2" d="M3 2v24h26M3 17h9v9"/></svg></button>
<button class="on wide" aria-label="捕捉"><svg viewBox="0 0 30 30"><rect class="d w2" x="4" y="4" width="24" height="24" rx="3"/><circle class="b lf" cx="4" cy="4" r="3"/></svg><span class="dd dk"></span></button>
<button class="sep" aria-label="交点"><svg viewBox="0 0 30 30"><path class="l w2" d="M1 1l28 28M29 1L1 29M11 15h8"/></svg></button>
<button class="wide sep" aria-label="角度"><svg viewBox="0 0 30 30"><path class="d w2" d="M2 25L24 3"/><path fill="#9aa1ad" d="M2 24h28v4H2z"/></svg><span class="dd dk"></span></button>
<button class="wide" aria-label="输入"><svg viewBox="0 0 34 30"><path class="d w2" d="M0 10h14M7 3v14"/><path fill="#4f586b" d="M12 19h21v8H12z"/></svg><span class="dd dk"></span></button>
<button class="on" aria-label="选择"><svg viewBox="0 0 30 30"><path class="d w2" d="M25 8h3v10M6 25v3h12"/><rect class="b" x="2" y="2" width="22" height="22"/><path fill="#1a73e8" d="M5 5h16v16H5zM20 16l9 9-6 1-2 4z"/></svg></button>
<button aria-label="折线"><svg viewBox="0 0 30 30"><path class="d w2" d="M2 28Q4 12 9 6l17-3"/><circle class="d" cx="27" cy="3" r="2"/><path fill="#4f586b" d="M19 14l9 9-6 1-3 5z"/></svg></button>
<button class="bare" aria-label="全屏"><svg viewBox="0 0 30 30"><path fill="none" stroke="#333" stroke-width="2" d="M18 2h10v10M28 2L17 13M12 28H2V18M2 28l11-11"/></svg></button>
</div>
</footer>

<!-- TASKBAR -->
<footer class="taskbar">
<div class="weather">
<svg viewBox="0 0 50 50"><path fill="#7fb6e8" d="M0 12h15l-3 9-2-4-2 8-3-9-2 4z"/><path fill="#1b8be0" d="M22 8h8v22h-8z"/><circle cx="26" cy="35" r="11" fill="#a8d4f7"/><circle cx="26" cy="35" r="7" fill="#0d6fd0"/><circle cx="34" cy="10" r="16" fill="#c42b1c"/><text class="badge" x="34" y="17">3</text></svg>
<p>冷天<br><span>现在</span></p>
</div>
<div class="dock">
<button class="start" aria-label="开始"><svg viewBox="0 0 48 48"><defs><linearGradient id="wg" x2="1" y2="1"><stop offset="0" stop-color="#4cc9fb"/><stop offset="1" stop-color="#0a63b8"/></linearGradient></defs><path fill="url(#wg)" d="M2 2h21v21H2zM25 2h21v21H25zM2 25h21v21H2zM25 25h21v21H25z"/></svg></button>
<label class="search"><svg viewBox="0 0 32 32"><circle cx="13" cy="13" r="11" fill="none" stroke="#222" stroke-width="3"/><path stroke="#222" stroke-width="4" d="M20 22l8 8"/></svg><input type="text" aria-label="搜索" placeholder="搜索">
<svg class="pepper" viewBox="0 0 90 44"><path fill="#f08a17" d="M5 17q8-5 13 0 2 12-5 24-9-10-8-24z"/><path fill="none" stroke="#4a8b1d" stroke-width="3" d="M11 17Q7 8 10 1M30 10q-10-4-15-2M84 18q4-6 1-12"/><path fill="#3d7a1c" d="M26 6q4-6 13 0 10 4 17 4 12 3 10 9-3 6-14 3Q34 20 26 6z"/><path fill="#d92318" d="M86 16q6 8-1 16Q68 48 44 40q-16-5-20-11 16 3 30 0 14-2 22-12 5-4 10-1z"/></svg></label>
<button aria-label="K"><svg viewBox="0 0 48 48"><rect width="48" height="48" rx="9" fill="#1f85fb"/><circle cx="24" cy="24" r="18" fill="none" stroke="#fff" stroke-width="3"/><path fill="none" stroke="#fff" stroke-width="5" d="M19 14v20M33 14L21 25l11 9"/></svg></button>
<button aria-label="计算器"><svg viewBox="0 0 48 48"><path fill="#5a74c4" d="M10 4l28-4v42l-26 6-4-4z"/><path fill="#8fb0f2" d="M12 2l26-2v40l-26 6z"/><path fill="#5f8ff5" d="M16 8l18-2v8l-18 2z"/><path stroke="#e3ecff" stroke-width="4" stroke-dasharray="5 3" d="M15 22l21-3M15 30l21-3M15 38l21-3"/></svg></button>
<button class="run" aria-label="WPS"><svg viewBox="0 0 48 48"><path fill="#f5302a" d="M1 9h15l5 20 7-20h19L36 40h-9l-3-9-4 9h-8z"/><path fill="none" stroke="#fff" stroke-width="2" d="M14 16l6 22M37 14L27 37l-6-22h14"/></svg></button>
<button class="run" aria-label="文件夹"><svg viewBox="0 0 48 48"><path fill="#f7b500" d="M3 9q0-3 3-3h12l6 6h18q3 0 3 3v25H3z"/><path fill="#ffd23c" d="M3 14h42v26q0 3-3 3H6q-3 0-3-3z"/><path fill="#3f97e8" d="M12 37h24v6H12z"/></svg></button>
<button class="run" aria-label="文档"><svg viewBox="0 0 48 48"><rect width="48" height="48" rx="7" fill="#0a97f8"/><path fill="#eefaf5" d="M6 6h36v24l-6 12H6z"/><path stroke="#0a84e8" stroke-width="3" d="M11 14h22M11 22h14M11 30h10M11 37h10"/><circle cx="34" cy="31" r="9" fill="#eefaf5" stroke="#0a84e8" stroke-width="2"/><path fill="none" stroke="#0a84e8" stroke-width="2" d="M38 28q-5-3-7 1-1 5 3 6 4 0 4-4h-4M28 38v8l6-4 6 4v-8"/></svg></button>
<button class="run act" aria-label="GTJ"><svg viewBox="0 0 48 48"><rect width="48" height="48" rx="9" fill="#d3ecfc"/><use href="#i-logo" x="7" y="8" width="35" height="35"/></svg></button>
<button class="run" aria-label="Edge"><svg viewBox="0 0 48 48"><defs><linearGradient id="eg" x2="1"><stop offset="0" stop-color="#1b9de2"/><stop offset="1" stop-color="#5fe05a"/></linearGradient></defs><path fill="url(#eg)" d="M1 22Q4 0 26 0q21 2 22 19 0 12-12 12-7-1-6-4 3-4-1-9-5-5-13-2-8 2-15 10z"/><path fill="#1063b5" d="M1 21Q6 11 17 12q9 0 12 6-9-1-10 8 0 11 13 13 7 0 12-4Q36 48 22 48 0 46 1 21z"/><path fill="#0d3f86" d="M19 26q1 12 14 14 5 0 9-3-6 9-15 9-12-3-12-14 0-9 8-12-4 2-4 6z"/></svg></button>
<button class="run" aria-label="CAD"><svg viewBox="0 0 48 48"><rect width="48" height="48" rx="4" fill="#777"/><rect x="4" y="4" width="40" height="40" fill="#0e4c9a"/><path fill="none" stroke="#9ec3ee" stroke-width="2" d="M24 8l-9 32M24 8l9 32"/><text class="cad" x="24" y="32">CAD</text></svg></button>
<button class="run" aria-label="网盘"><svg viewBox="0 0 48 48"><rect width="48" height="48" rx="9" fill="#fff"/><g fill="none" stroke-width="5"><circle cx="15" cy="29" r="8" stroke="#2aa5f2"/><circle cx="33" cy="29" r="8" stroke="#2aa5f2"/><circle cx="24" cy="18" r="8" stroke="#2aa5f2"/><path stroke="#f0435a" d="M17 22q0 6 7 6t7-6"/></g><path fill="#e33" d="M16 45h8v3h-8z"/><path fill="#27e" d="M24 45h8v3h-8z"/></svg></button>
</div>
<div class="tray">
<svg viewBox="0 0 32 32"><path fill="none" stroke="#222" stroke-width="3" d="M6 22l10-11 10 11"/></svg>
<svg viewBox="0 0 32 32"><path fill="#aaa" stroke="#111" stroke-width="3" d="M8 27q-6-1-6-6t6-6q1-8 9-8 7 1 9 8 5 1 5 6t-5 6z"/><path fill="#eee" d="M6 25l12-8 10 8z"/></svg>
<svg viewBox="0 0 32 32"><path fill="none" stroke="#111" stroke-width="3" d="M2 17Q3 3 15 2q8 0 14 8M30 2v9h-9M3 31V22h9M4 23l8 8"/><circle cx="24" cy="24" r="8" fill="#ff9800"/></svg>
<svg viewBox="0 0 32 32"><path fill="none" stroke="#555" stroke-width="6" d="M4 10h24v11H4zM16 1v30"/><path fill="none" stroke="#fff" stroke-width="4" d="M4 10h24v11H4zM16 2v28"/></svg>
<svg class="ime" viewBox="0 0 32 32"><path fill="#f4511e" d="M1 5l24-5q4 0 4 3l3 23q0 2-3 3L9 32q-3 0-4-3z"/><path fill="none" stroke="#fff" stroke-width="5" d="M25 8Q11 6 10 12q0 3 7 4 8 2 6 6-3 4-15 2"/></svg>
<div class="sys">
<svg viewBox="0 0 32 32"><path fill="none" stroke="#222" stroke-width="3" d="M1 12Q16-3 31 12M6 17q10-9 20 0M11 22q5-4 10 0"/><circle cx="16" cy="27" r="3" fill="#222"/></svg>
<svg viewBox="0 0 32 32"><path fill="none" stroke="#222" stroke-width="2" d="M1 12h6l7-7v23l-7-8H1zM17 11q4 5 0 10"/><path fill="none" stroke="#bbb" stroke-width="2" d="M21 7q6 9 0 18M25 3q9 13 0 26"/></svg>
<svg viewBox="0 0 32 32"><path fill="none" stroke="#222" stroke-width="3" d="M1 14v11q0 3 4 3h12M10 8h14q3 0 3 3v4"/><path fill="#222" d="M4 1L0 10h5l-1 5 6-8H6zM12 11h12v7h-5l-3 7H6zM17 20h15v4l-8 8-7-8z"/></svg>
</div>
<p class="clock">19:20<br>2025/1/16</p>
</div>
</footer>

</body>
</html>
```
FILE: styles.css
```css
*
{
box-sizing:border-box;
}
html, body
{
height:100%;
}
body
{
margin:0;
display:flex;
flex-direction:column;
overflow:hidden;
background:white;
color:#333;
font:24px/32px "Noto Sans", "Noto Sans CJK SC", sans-serif;
}
h1, h2, h3, p, ul
{
margin:0;
padding:0;
font-size:24px;
font-weight:normal;
list-style:none;
}
button, input, select
{
margin:0;
padding:0;
border:0;
background:none;
color:inherit;
font:inherit;
}
a
{
color:inherit;
text-decoration:none;
}
button
{
display:flex;
align-items:center;
white-space:nowrap;
}
svg
{
display:block;
flex:none;
overflow:visible;
}
svg.defs
{
position:absolute;
width:0;
height:0;
}

/* icon strokes */
.d { fill:none; stroke:#4f586b; stroke-width:2; }
.b { fill:none; stroke:#1a73e8; stroke-width:2; }
.l { fill:none; stroke:#b5b5b5; stroke-width:2; }
.r { fill:none; stroke:#d9232e; stroke-width:2; }
.bf { fill:#1a73e8; }
.lf { fill:#d4e5fb; }
.wf { fill:white; }
.w2 { stroke-width:2; }
.w3 { stroke-width:3; }
.w4 { stroke-width:4; }
.ord { font-size:20px; font-weight:bold; fill:#4f586b; text-anchor:middle; }
.t2d { font-size:18px; font-weight:bold; fill:#1a73e8; }

.dd
{
width:0;
height:0;
border:5px solid transparent;
border-top:7px solid #555;
border-bottom:0;
}
.dd.pale { border-top-color:#bbb; }
.dd.grey { border-top-color:#999; }
.dd.dk { border-top-color:#4f586b; }

/* title bar */
.top
{
display:flex;
height:82px;
border-bottom:2px solid #f1f1f1;
}
.logo
{
position:relative;
width:100px;
padding:6px 16px;
}
.logo svg { width:60px; height:60px; }
.logo::after
{
content:"";
position:absolute;
right:14px;
bottom:10px;
border:4px solid #777;
border-top-color:transparent;
border-left-color:transparent;
}
.topRows
{
flex:1;
}
.titleRow
{
display:flex;
height:44px;
line-height:42px;
}
.quick
{
display:flex;
align-items:center;
width:900px;
height:38px;
}
.quick button
{
justify-content:center;
width:46px;
height:34px;
margin:0 3px;
}
.quick svg { width:30px; height:30px; }
.quick .on { background:#c3d9f1; }
.quick .dd { margin-right:8px; }
.quick .bar { margin-left:14px; }
.title
{
flex:1;
}
.winBtns
{
display:flex;
align-items:center;
height:38px;
gap:52px;
padding-right:28px;
}
.winBtns svg { width:20px; height:20px; }
.tabRow
{
display:flex;
justify-content:space-between;
height:38px;
}
.tabs
{
display:flex;
}
.tabs a
{
height:38px;
padding:0 26px;
line-height:36px;
}
.tabs .cur
{
border-radius:19px;
background:#1890ff;
color:white;
}
.account
{
display:flex;
align-items:center;
height:34px;
padding-right:12px;
}
.help
{
display:flex;
align-items:center;
width:640px;
height:34px;
margin-right:12px;
padding-right:14px;
border:2px solid #e3e3e3;
border-radius:4px;
color:#000;
}
.help input
{
flex:1;
height:30px;
text-indent:-6px;
}
.help svg, .find svg { width:22px; height:22px; }
.avatar { width:32px; height:32px; }
.user { margin-right:34px; }
.ic { width:30px; height:30px; }
.qm { width:16px; height:30px; margin:0 4px 0 16px; }
.shirt { margin:0 16px 0 16px; }

/* ribbon */
.ribbon
{
display:flex;
height:198px;
padding:4px 0 8px 3px;
border-bottom:2px solid #d8d8d8;
}
.grp
{
display:flex;
flex-direction:column;
justify-content:space-between;
padding:0 11px;
border-right:2px solid #dcdcdc;
text-align:center;
}
.btns
{
display:flex;
}
.btns button
{
flex-direction:column;
gap:10px;
padding:8px 10px 0;
}
.btns svg { width:60px; height:60px; margin-right:4px; }

.pickers
{
display:flex;
gap:6px;
height:52px;
padding:3px 5px;
background:#f1f1f1;
}
.pickers label
{
position:relative;
width:198px;
height:46px;
}
.pickers select
{
width:100%;
height:100%;
padding-left:5px;
border:2px solid #dedede;
border-radius:6px;
background:white;
appearance:none;
}
.pickers label::after
{
content:"";
position:absolute;
right:12px;
top:20px;
border:5px solid transparent;
border-top:7px solid #4f586b;
border-bottom:0;
}

/* panels */
.work
{
display:flex;
flex:1;
min-height:0;
}
.panel
{
display:flex;
flex-direction:column;
border:2px solid #d8d8d8;
background:white;
}
.grip
{
display:flex;
justify-content:flex-end;
flex:none;
height:22px;
padding-right:6px;
border-bottom:2px solid #d8d8d8;
background:#e7e7e7;
color:#999;
}
.grip button { height:20px; font-size:28px; line-height:20px; }
.cap
{
flex:none;
height:44px;
padding-left:16px;
border-bottom:2px solid #dedede;
background:#f2f2f2;
color:#777;
line-height:42px;
}
.vbar
{
flex:none;
width:28px;
padding-left:4px;
}
.thumb
{
display:block;
width:16px;
border-radius:8px;
background:#cbcbcb;
}

.nav
{
width:260px;
margin-right:8px;
border-left:2px solid #dedede;
}
.navTools
{
display:flex;
align-items:center;
flex:none;
gap:8px;
height:56px;
padding-left:4px;
border-bottom:2px solid #dedede;
}
.navTools button
{
justify-content:center;
width:47px;
height:44px;
border-radius:6px;
}
.navTools .on { background:#c3d9f1; }
.navTools svg { width:30px; height:30px; }
.navTools .sm { width:20px; height:20px; }
.navBody
{
display:flex;
flex:1;
min-height:0;
padding-top:8px;
overflow:hidden;
}
.navList
{
flex:1;
min-width:0;
}
.navList li
{
display:flex;
align-items:center;
gap:28px;
height:50px;
margin-bottom:6px;
padding-left:34px;
overflow:hidden;
white-space:nowrap;
}
.navList .head { padding-left:6px; background:#ededed; }
.navList .sel { background:#d3e7ff; }
.navList svg { width:36px; height:36px; }
.navThumb { height:836px; margin-top:24px; }
.nav .vbar { padding-left:6px; }

.side
{
display:flex;
flex-direction:column;
width:560px;
}
.comps
{
height:746px;
margin-bottom:8px;
}
.ptabs
{
display:flex;
flex:none;
height:46px;
border-bottom:2px solid #d0d0d0;
background:#f2f2f2;
}
.ptabs button
{
justify-content:center;
width:130px;
border-right:2px solid #c8cacf;
border-top:2px solid #c8cacf;
background:#dedede;
color:#777;
}
.ptabs .cur
{
background:#f2f2f2;
color:#222;
font-weight:bold;
}
.compTools
{
display:flex;
align-items:center;
flex:none;
gap:24px;
height:56px;
padding-left:8px;
border-bottom:2px solid #e0e0e0;
}
.compTools button { gap:10px; }
.compTools svg { width:30px; height:30px; }
.compTools .more
{
width:22px;
height:40px;
margin:0 4px 0 auto;
border:2px solid #e5e5e5;
border-radius:6px;
}
.compTools .more svg { width:18px; height:18px; }
.compTools .dd { margin-left:4px; }
.find
{
display:flex;
align-items:center;
flex:none;
height:38px;
padding:0 14px 0 4px;
border-bottom:2px solid #dcdcdc;
}
.find input { flex:1; height:34px; }
.find input::placeholder { color:#999; }
.treeBody
{
display:flex;
flex:1;
min-height:0;
overflow:hidden;
}
.tree
{
flex:1;
padding-top:4px;
}
.tree li
{
display:flex;
align-items:center;
gap:8px;
height:48px;
}
.tree .t1 { padding-left:26px; }
.tree .t2 { padding-left:66px; }
.tree .t3 { padding-left:120px; }
.tree span
{
padding:5px 26px 5px 6px;
border-radius:6px;
}
.tree .sel { background:#c3d9f1; }
.tw
{
border:6px solid transparent;
border-top:8px solid #888;
border-bottom:0;
}
.treeThumb { height:188px; margin-top:32px; }

.props
{
flex:1;
min-height:0;
border-bottom:0;
}
.propBody
{
display:flex;
flex:1;
min-height:0;
overflow:hidden;
border-bottom:2px solid #d8d8d8;
}
.treeBody .vbar { width:26px; }
.prop
{
flex:1;
height:630px;
border-collapse:collapse;
table-layout:fixed;
}
.prop .p1 { width:43px; }
.prop .p2 { width:202px; }
.prop tr { height:42px; }
.prop th, .prop td
{
padding:0 5px;
border-right:2px solid #dcdcdc;
border-bottom:2px solid #dcdcdc;
font-weight:normal;
overflow:hidden;
white-space:nowrap;
}
.prop tr + tr th { padding:0; background:#f0f0f0; border-color:#cfcfcf; }
.prop td:nth-child(2) { color:#1464f4; }
.prop td.plain { color:#333; }
.rb
{
display:inline-block;
width:18px;
height:20px;
margin:0 3px;
vertical-align:1px;
}
.propThumb { height:142px; margin-top:28px; }
.props .vbar { width:34px; padding-left:10px; }
.propFoot
{
flex:none;
height:60px;
margin:0 -2px;
padding:7px 13px;
background:white;
}
.secBtn
{
justify-content:center;
width:158px;
height:48px;
border:2px solid #ccc;
border-radius:6px;
}

.gutter
{
display:flex;
align-items:center;
width:8px;
padding-bottom:600px;
background:#fff;
}
.gutter button, .viewHandle
{
width:8px;
height:200px;
background:#5f6974;
}

/* 3d view */
.center
{
display:flex;
flex-direction:column;
flex:1;
min-width:0;
}
.view
{
position:relative;
flex:1;
min-height:0;
overflow:hidden;
background:#383838;
}
.scene { width:100%; height:100%; }
.ax path { fill:none; stroke-width:2; }
.gr { stroke:red; }
.gg { stroke:#00f000; }
.gdark { stroke:#084; }
.gw { stroke:white; }
.dim { font:300 58px Lato, sans-serif; fill:white; }
.gname { fill:#00f000; font-size:48px; }
.rod { fill:none; stroke:#999; stroke-width:1; }
.ring { fill:none; stroke:#a8a8a8; stroke-width:2; }
.tag path { fill:none; stroke:#008a00; stroke-width:2; }
.tag text { font:32px "Noto Sans", sans-serif; fill:white; text-anchor:middle; }
.giz { font:26px "Noto Sans", sans-serif; text-anchor:middle; }
.ctrl
{
position:absolute;
left:6px;
top:6px;
padding:22px;
border-radius:12px;
background:white;
box-shadow:0 8px 60px rgba(0,0,0,.3);
}
.ctrl h3 { margin-bottom:42px; }
.ctrl fieldset
{
margin:0;
padding:10px 20px 14px;
border:2px solid #ccc;
border-radius:6px;
}
.ctrl label
{
display:flex;
align-items:center;
gap:6px;
height:46px;
}
.ctrl input
{
width:28px;
height:28px;
border-radius:4px;
background:#2b7de3;
appearance:none;
}
.ctrl input::after
{
content:"";
display:block;
width:9px;
height:16px;
margin:3px 0 0 9px;
border:solid white;
border-width:0 3px 3px 0;
transform:rotate(40deg);
}
.viewTools
{
position:absolute;
right:0;
top:2px;
display:flex;
flex-direction:column;
align-items:center;
width:65px;
height:490px;
padding:25px 4px 0 0;
border-radius:6px;
background:white;
}
.viewTools button { margin-bottom:17px; }
.viewTools svg { width:40px; height:40px; }
.viewTools .dd { margin-bottom:14px; }
.viewTools hr
{
width:46px;
margin:0 0 12px;
border:0;
border-top:2px solid #4f586b;
}
.viewHandle
{
position:absolute;
right:0;
top:354px;
}
.split
{
display:flex;
justify-content:center;
height:8px;
background:white;
}
.split button { width:200px; height:8px; background:#5f6974; }

/* rebar editor */
.rebar
{
flex:none;
height:598px;
}
.rebarTools
{
display:flex;
align-items:center;
flex:none;
gap:25px;
height:56px;
padding-left:12px;
border-bottom:2px solid #dcdcdc;
}
.rebarTools button { gap:10px; }
.rebarTools svg { width:30px; height:30px; }
.steps { display:flex; gap:33px; margin-right:9px; }
.rebarBody
{
display:flex;
flex:1;
min-height:0;
}
.tableClip
{
flex:1;
min-width:0;
overflow:hidden;
background:linear-gradient(to right, #efefef 28px, white 28px);
}
.bars
{
width:2412px;
border-collapse:collapse;
table-layout:fixed;
color:#000;
font-family:"Liberation Mono", "Noto Sans CJK SC", monospace;
font-size:20px;
}
.bars .c0 { width:28px; }
.bars .c1 { width:145px; }
.bars .c2 { width:112px; }
.bars .c3 { width:72px; }
.bars .c4 { width:66px; }
.bars .c5 { width:432px; }
.bars .c6 { width:332px; }
.bars .c7 { width:584px; }
.bars .c8 { width:76px; }
.bars .c9 { width:78px; }
.bars .c10 { width:98px; }
.bars .c11 { width:122px; }
.bars .c12 { width:122px; }
.bars tr { height:92px; }
.bars tr.hd, .bars tr.blank { height:42px; }
.bars td, .bars th
{
padding:0 0 6px 5px;
border-right:2px solid #dcdcdc;
border-bottom:2px solid #dcdcdc;
background:#c1dee0;
white-space:nowrap;
text-align:left;
}
.bars .blank td { background:white; }
.bars th
{
padding:0;
background:#f0f0f0;
color:#333;
font:24px/32px "Noto Sans", "Noto Sans CJK SC", sans-serif;
text-align:center;
}
.bars .hd th { background:white; }
.bars .hd .pick { background:#80bbfa; color:white; }
.bars .on th { background:#80bbfa; color:white; font-weight:bold; }
.bars .cn { font-size:24px; line-height:28px; white-space:normal; }
.bars i { font-size:20px; font-style:normal; }
.bars .mid { padding:4px 0 0 7px; }
.bars .fig { padding:0; }
.bars .fig svg { width:100%; height:88px; }
.bars .cursor { outline:3px solid #6aa7e8; outline-offset:-2px; }
.fig text { font-family:"Liberation Serif", serif; }
.red { fill:red; }
.f1 { font-size:27px; }
.f2 { font-size:38px; }
.barThumb { height:140px; margin-top:276px; }
.rebar .vbar { padding-left:6px; }
.hbar
{
display:flex;
align-items:center;
flex:none;
height:26px;
gap:12px;
padding:0 38px 4px 10px;
}
.track { flex:1; }
.track .thumb { width:69%; height:16px; }
.larr, .rarr
{
border:8px solid transparent;
border-left-width:0;
border-right:7px solid #4f586b;
}
.rarr { border-right-width:0; border-left:7px solid #4f586b; }

/* status bar */
.status
{
display:flex;
align-items:center;
flex:none;
height:62px;
padding-left:4px;
background:#fcfcfc;
}
.facts { display:flex; width:900px; }
.facts b { font-weight:normal; margin-left:10px; }
.f-a { width:180px; }
.f-b { width:280px; }
.f-c { width:220px; }
.snap { display:flex; gap:6px; }
.snap button
{
justify-content:center;
gap:8px;
width:50px;
height:48px;
border:2px solid #999;
border-radius:5px;
}
.snap .wide { width:72px; }
.snap .sep { margin-left:6px; }
.snap .on { border-color:#3b82dd; background:#d5e4fa; }
.snap .bare { margin-left:15px; border:0; }
.snap svg { width:30px; height:30px; }

/* taskbar */
.taskbar
{
display:flex;
align-items:center;
justify-content:space-between;
flex:none;
height:96px;
border-top:2px solid #c5bcb8;
background:linear-gradient(to right, #f5e6de, #fbe9e1 12%, #f4e8e0 28%, #fbe7e0 44%, #f0e4e0 58%, #faeadf 78%, #efe8e0 90%, #e7e7e7);
}
.weather
{
display:flex;
gap:10px;
width:955px;
padding-left:42px;
color:#222;
}
.weather svg { width:50px; height:50px; margin-top:4px; }
.weather span { color:#666; }
.badge { fill:white; font-size:20px; text-anchor:middle; }
.dock { display:flex; align-items:center; flex:1; gap:12px; }
.dock button
{
position:relative;
justify-content:center;
width:76px;
height:80px;
border-radius:8px;
}
.dock svg { width:48px; height:48px; }
.dock .start { width:48px; margin-right:16px; }
.search
{
display:flex;
align-items:center;
width:436px;
height:62px;
padding:0 8px 0 18px;
border:2px solid #e2d6d2;
border-radius:31px;
background:#fdf8f6;
}
.search input { flex:1; min-width:0; padding-left:20px; }
.search input::placeholder { color:#555; }
.dock .search svg { width:32px; height:32px; }
.dock .search .pepper { width:90px; height:44px; }
.run::after
{
content:"";
position:absolute;
bottom:0;
left:32px;
width:12px;
height:6px;
border-radius:3px;
background:#85807d;
}
.act { background:#faf3f0; }
.act::after { left:22px; width:32px; background:#0a74d4; }
.cad { fill:white; font-size:17px; font-weight:bold; text-anchor:middle; }
.tray
{
display:flex;
align-items:center;
gap:32px;
padding-right:38px;
color:#222;
}
.tray svg { width:32px; height:32px; }
.tray .ime { margin-left:12px; }
.sys { display:flex; gap:16px; margin:0 -6px 0 12px; }
.clock { text-align:right; }
```
